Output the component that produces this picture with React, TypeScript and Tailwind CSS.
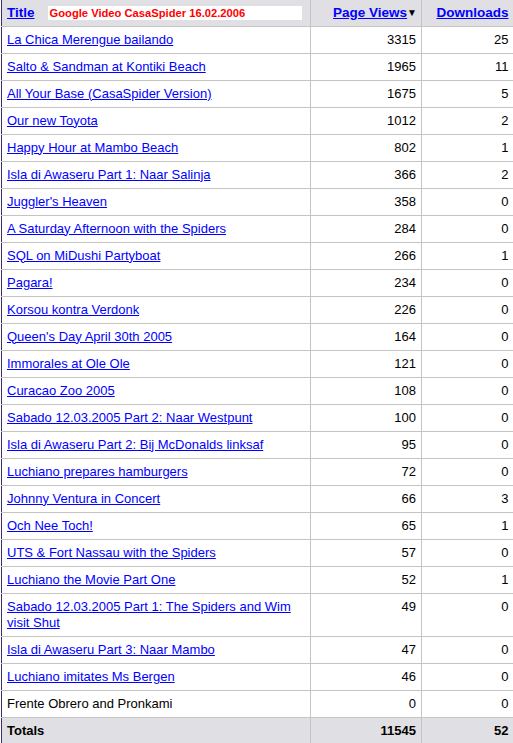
const rows: [string, number, number, boolean?][] = [
  ["La Chica Merengue bailando", 3315, 25],
  ["Salto & Sandman at Kontiki Beach", 1965, 11],
  ["All Your Base (CasaSpider Version)", 1675, 5],
  ["Our new Toyota", 1012, 2],
  ["Happy Hour at Mambo Beach", 802, 1],
  ["Isla di Awaseru Part 1: Naar Salinja", 366, 2],
  ["Juggler's Heaven", 358, 0],
  ["A Saturday Afternoon with the Spiders", 284, 0],
  ["SQL on MiDushi Partyboat", 266, 1],
  ["Pagara!", 234, 0],
  ["Korsou kontra Verdonk", 226, 0],
  ["Queen's Day April 30th 2005", 164, 0],
  ["Immorales at Ole Ole", 121, 0],
  ["Curacao Zoo 2005", 108, 0],
  ["Sabado 12.03.2005 Part 2: Naar Westpunt", 100, 0],
  ["Isla di Awaseru Part 2: Bij McDonalds linksaf", 95, 0],
  ["Luchiano prepares hamburgers", 72, 0],
  ["Johnny Ventura in Concert", 66, 3],
  ["Och Nee Toch!", 65, 1],
  ["UTS & Fort Nassau with the Spiders", 57, 0],
  ["Luchiano the Movie Part One", 52, 1],
  ["Sabado 12.03.2005 Part 1: The Spiders and Wim visit Shut", 49, 0],
  ["Isla di Awaseru Part 3: Naar Mambo", 47, 0],
  ["Luchiano imitates Ms Bergen", 46, 0],
  ["Frente Obrero and Pronkami", 0, 0, true],
];

export default function App() {
  return (
    <div className="w-[513px] h-[743px] overflow-hidden bg-white pl-px font-['Liberation_Sans',Arial,sans-serif] text-[13px] leading-4 text-black">
      <table className="w-[512px] table-fixed border-collapse border-l border-[#3c2f6e]">
        <colgroup>
          <col className="w-[309px]" />
          <col className="w-[111px]" />
          <col className="w-[92px]" />
        </colgroup>
        <thead>
          <tr className="bg-[#e0dfe3] h-[26px]">
            <th className="border-b border-r border-[#c4c4c4] pl-[5px] pr-2 text-left align-middle">
              <div className="flex items-center gap-[13px]">
                <a href="#" className="text-[13.5px] font-bold text-[#0000ff] underline">Title</a>
                <span className="flex-1 h-[14px] bg-white pl-[2px] text-[11.2px] leading-[14px] font-bold text-[#ff0000] whitespace-nowrap">
                  Google Video CasaSpider 16.02.2006
                </span>
              </div>
            </th>
            <th className="border-b border-r border-[#c4c4c4] pr-[4px] text-right font-bold">
              <a href="#" className="text-[13.5px] text-[#0000ff] underline">Page Views</a>
              <span className="text-[10px] align-[1px]">▼</span>
            </th>
            <th className="border-b border-[#c4c4c4] pr-[5px] text-right font-bold">
              <a href="#" className="text-[13.5px] text-[#0000ff] underline">Downloads</a>
            </th>
          </tr>
        </thead>
        <tbody>
          {rows.map(([title, views, dl, plain]) => (
            <tr key={title}>
              <td className="border-b border-r border-[#c4c4c4] pl-[5px] pr-4 pt-[5px] pb-[5px] align-top">
                {plain ? (
                  <span>{title}</span>
                ) : (
                  <a href="#" className="text-[#0000ff] underline">{title}</a>
                )}
              </td>
              <td className="border-b border-r border-[#c4c4c4] pr-[5px] pt-[5px] pb-[5px] text-right align-top">{views}</td>
              <td className="border-b border-[#c4c4c4] pr-[5px] pt-[5px] pb-[5px] text-right align-top">{dl}</td>
            </tr>
          ))}
          <tr className="bg-[#e0dfe3] font-bold">
            <td className="border-r border-[#c4c4c4] pl-[5px] pt-[5px] pb-[6px]">Totals</td>
            <td className="border-r border-[#c4c4c4] pr-[5px] pt-[5px] pb-[6px] text-right">11545</td>
            <td className="pr-[5px] pt-[5px] pb-[6px] text-right">52</td>
          </tr>
        </tbody>
      </table>
    </div>
  );
}
